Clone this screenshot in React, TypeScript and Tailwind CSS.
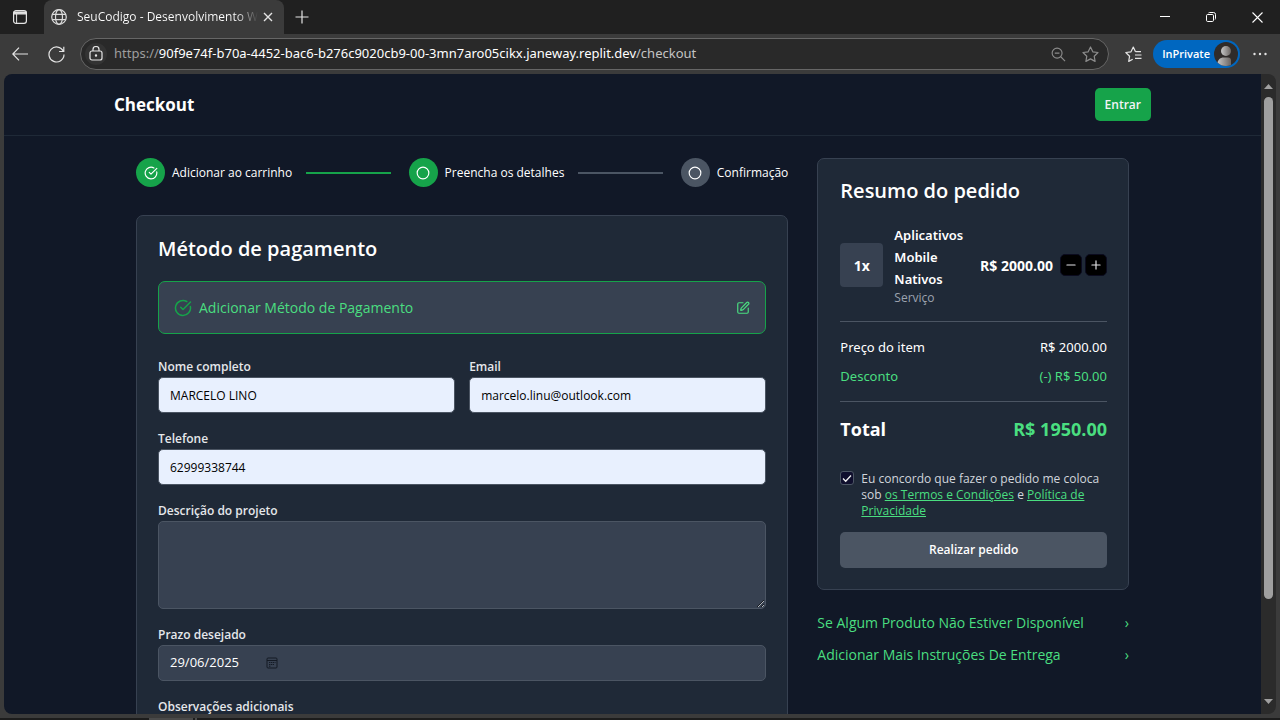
import { useState } from "react";
import type { ReactNode } from "react";
import { Circle, CircleCheckBig, Minus, Plus, SquarePen } from "lucide-react";

const iconButton = "flex shrink-0 items-center justify-center text-[#e4e4e4]";

function TitleBar() {
  return (
    <div className="flex h-[34px] shrink-0 items-stretch bg-[#202020]">
      <button aria-label="Menu de guias" className={`${iconButton} w-10`}>
        <svg width="16" height="16" viewBox="0 0 16 16" fill="none" stroke="currentColor" strokeWidth="1.2">
          <rect x="1.6" y="1.6" width="12.8" height="12.8" rx="2.4" />
          <path d="M2 3h12v1.8H2z" fill="currentColor" />
          <path d="M4.600 5v9" strokeWidth="1" />
        </svg>
      </button>
      <div className="ml-1 flex w-60 items-center rounded-t-lg bg-[#3b3b3b] pr-[6px] pl-[7px]">
        <svg width="16" height="16" viewBox="0 0 16 16" fill="none" stroke="#dcdcdc" strokeWidth="1.2" className="shrink-0">
          <circle cx="8" cy="8" r="7.3" />
          <ellipse cx="8" cy="8" rx="3.5" ry="7.3" />
          <path d="M1.2 5.4h13.6M1.2 10.6h13.6" />
        </svg>
        <span className="ml-[10px] w-[181px] shrink-0 overflow-hidden bg-linear-to-r from-white from-88% to-transparent bg-clip-text text-[12px] whitespace-nowrap text-transparent">
          SeuCodigo - Desenvolvimento Web
        </span>
        <button aria-label="Fechar guia" className={`${iconButton} h-6 w-5`}>
          <svg width="10" height="10" viewBox="0 0 10 10" stroke="currentColor" strokeWidth="1.4">
            <path d="M1 1l8 8M9 1l-8 8" />
          </svg>
        </button>
      </div>
      <button aria-label="Nova guia" className={`${iconButton} w-9`}>
        <svg width="14" height="14" viewBox="0 0 14 14" stroke="currentColor" strokeWidth="1.2">
          <path d="M7 .5v13M.5 7h13" />
        </svg>
      </button>
      <div className="ml-auto flex">
        <button aria-label="Minimizar" className={`${iconButton} w-[46px]`}>
          <svg width="10" height="10" viewBox="0 0 10 10" stroke="#fff">
            <path d="M0 4.5h10" />
          </svg>
        </button>
        <button aria-label="Restaurar" className={`${iconButton} w-[46px]`}>
          <svg width="10" height="10" viewBox="0 0 10 10" fill="none" stroke="#fff">
            <rect x=".5" y="2.500" width="7" height="7" rx="1.200" />
            <path d="M2.500 .9C2.800.6 3.200.5 3.700.5H7.500a2 2 0 0 1 2 2v3.800c0 .5-.1.9-.4 1.200" />
          </svg>
        </button>
        <button aria-label="Fechar" className={`${iconButton} w-[46px]`}>
          <svg width="11" height="11" viewBox="0 0 11 11" stroke="#fff" strokeWidth="1.1">
            <path d="M.5.5l10 10M10.500.5l-10 10" />
          </svg>
        </button>
      </div>
    </div>
  );
}

function AddressBar() {
  return (
    <div className="flex h-10 shrink-0 items-center bg-[#3b3b3b] pr-1">
      <button aria-label="Voltar" className={`${iconButton} w-10`}>
        <svg width="16" height="14" viewBox="0 0 16 14" fill="none" stroke="currentColor" strokeWidth="1.2">
          <path d="M16 7H.8M7 .6L.8 7 7 13.400" />
        </svg>
      </button>
      <button aria-label="Atualizar" className={`${iconButton} w-8`}>
        <svg width="17" height="17" viewBox="0 0 17 17" fill="none" stroke="currentColor" strokeWidth="1.2">
          <path d="M15.300 5.300A7.500 7.500 0 1 0 16 8.500M15.800.8v4.700h-4.700" />
        </svg>
      </button>
      <div className="ml-2 flex h-8 min-w-0 flex-1 items-center rounded-full border border-[#666666] bg-[#292929] pr-[2px] pl-1">
        <button aria-label="Informações do site" className={`${iconButton} size-[22px] rounded-full bg-[#333333]`}>
          <svg width="14" height="16" viewBox="0 0 14 16" fill="none" stroke="currentColor" strokeWidth="1.2">
            <rect x="1" y="5" width="12" height="9" rx="2" />
            <path d="M4 5V3.500a3 3 0 0 1 6 0V5" />
            <circle cx="7" cy="9.500" r=".6" fill="currentColor" />
          </svg>
        </button>
        <div
          role="textbox"
          aria-label="Barra de endereços"
          className="ml-[7px] min-w-0 flex-1 overflow-hidden font-['Noto_Sans',sans-serif] text-[13px] whitespace-nowrap text-[#9e9e9e]"
        >
          https://
          <span className="text-white">90f9e74f-b70a-4452-bac6-b276c9020cb9-00-3mn7aro05cikx.janeway.replit.dev</span>
          <span className="text-[#c4c4c4]">/checkout</span>
        </div>
        <button aria-label="Zoom" className={`${iconButton} w-8`}>
          <svg width="15" height="15" viewBox="0 0 16 16" fill="none" stroke="#8c8c8c" strokeWidth="1.2">
            <circle cx="6.500" cy="6.500" r="5.300" />
            <path d="M10.400 10.400l4.600 4.600M4 6.500h5" />
          </svg>
        </button>
        <button aria-label="Adicionar aos favoritos" className={`${iconButton} w-8`}>
          <svg width="17" height="17" viewBox="0 0 17 17" fill="none" stroke="#8c8c8c" strokeWidth="1.2" strokeLinejoin="round">
            <path d="M8.500 1l2.300 4.800 5.200.7-3.800 3.700.9 5.200-4.600-2.500-4.600 2.500.9-5.200L1 6.500l5.200-.7z" />
          </svg>
        </button>
      </div>
      <button aria-label="Favoritos" className={`${iconButton} ml-2 w-8`}>
        <svg width="17" height="17" viewBox="0 0 17 17" fill="none" stroke="currentColor" strokeWidth="1.200" strokeLinejoin="round">
          <path d="M10.500 5.700L8.300 1 6 5.800.8 6.500l3.800 3.700-.9 5.200 4-2.200M10.500 5.700H16M10 9h6.500M10 12.300h6.500" />
        </svg>
      </button>
      <button className="ml-1 flex h-7 shrink-0 items-center rounded-full bg-[#0067c0] pr-[2px] pl-[9px] text-[11px] font-semibold text-white">
        InPrivate
        <svg width="24" height="24" viewBox="0 0 24 24" className="ml-1">
          <defs>
            <linearGradient id="avatar" x1="0" x2="1">
              <stop offset="0" stopColor="#c8c8c8" />
              <stop offset="1" stopColor="#6a6461" />
            </linearGradient>
            <clipPath id="avatar-clip">
              <circle cx="12" cy="12" r="12" />
            </clipPath>
          </defs>
          <g clipPath="url(#avatar-clip)">
            <rect width="24" height="24" fill="#2f2b29" />
            <circle cx="12" cy="9" r="5" fill="url(#avatar)" />
            <path d="M3 24c0-6 3-8.500 7-8.500h4c2 0 3 1 3 3V24z" fill="url(#avatar)" />
          </g>
        </svg>
      </button>
      <button aria-label="Configurações e mais" className={`${iconButton} ml-1 w-8`}>
        <svg width="14" height="4" viewBox="0 0 14 4" fill="currentColor">
          <circle cx="1.500" cy="2" r="1.200" />
          <circle cx="7" cy="2" r="1.200" />
          <circle cx="12.500" cy="2" r="1.200" />
        </svg>
      </button>
    </div>
  );
}

function Scrollbar() {
  return (
    <div aria-hidden="true" className="flex w-[15px] shrink-0 flex-col items-center bg-[#2b2b2b] py-[10px]">
      <svg width="9" height="5" viewBox="0 0 9 5" fill="#a0a0a0">
        <path d="M4.500 0L9 5H0z" />
      </svg>
      <div className="mt-2 h-[81%] w-[9px] rounded-full bg-[#9f9f9f]" />
      <svg width="9" height="5" viewBox="0 0 9 5" fill="#a0a0a0" className="mt-auto">
        <path d="M0 0h9L4.500 5z" />
      </svg>
    </div>
  );
}

function Step({ label, state }: { label: string; state: "done" | "current" | "pending" }) {
  return (
    <li className="flex items-center gap-[7px]">
      <span
        className={`flex size-[29px] items-center justify-center rounded-full text-white ${
          state === "pending" ? "bg-[#4b5563]" : "bg-[#16a34a]"
        }`}
      >
        {state === "done" ? <CircleCheckBig size={14} /> : <Circle size={14} />}
      </span>
      <span className="text-[12px] whitespace-nowrap">{label}</span>
    </li>
  );
}

function StepLine({ done = false }: { done?: boolean }) {
  return (
    <li aria-hidden="true" className={`mr-[18px] ml-[14px] h-[2px] flex-1 ${done ? "bg-[#16a34a]" : "bg-[#4b5563]"}`} />
  );
}

function Field({ id, label, children }: { id: string; label: string; children: ReactNode }) {
  return (
    <div>
      <label htmlFor={id} className="block h-[22px] text-[12px] leading-6 font-semibold text-gray-200">
        {label}
      </label>
      {children}
    </div>
  );
}

const filledInput =
  "block h-9 w-full rounded-[5px] border border-[#4b5563] bg-[#e8f0fe] px-[11px] text-[12px] text-black outline-none";
const darkInput = "rounded-[5px] border border-[#4b5563] bg-[#374151] text-[13px] text-white";

function PaymentCard() {
  return (
    <section className="rounded-[7px] border border-[#374151] bg-[#1f2937] px-[21px] pt-[18px] pb-[22px]">
      <h2 className="text-[20px] leading-[30px] font-semibold">Método de pagamento</h2>
      <div className="mt-[17px] flex h-[53px] items-center rounded-[7px] border border-[#16a34a] bg-[#374151] px-[15px] text-[#4ade80]">
        <CircleCheckBig size={18} className="text-[#16a34a]" />
        <span className="ml-[7px] text-[14px]">Adicionar Método de Pagamento</span>
        <button aria-label="Editar método de pagamento" className="ml-auto">
          <SquarePen size={14} />
        </button>
      </div>
      <form className="mt-[21px] flex flex-col gap-[14px]">
        <div className="grid grid-cols-2 gap-[14px]">
          <Field id="nome" label="Nome completo">
            <input id="nome" className={filledInput} defaultValue="MARCELO LINO" />
          </Field>
          <Field id="email" label="Email">
            <input id="email" type="email" className={filledInput} defaultValue="marcelo.linu@outlook.com" />
          </Field>
        </div>
        <Field id="telefone" label="Telefone">
          <input id="telefone" type="tel" className={filledInput} defaultValue="62999338744" />
        </Field>
        <Field id="descricao" label="Descrição do projeto">
          <textarea id="descricao" className={`${darkInput} block h-[88px] w-full resize-y p-[11px]`} />
        </Field>
        <Field id="prazo" label="Prazo desejado">
          <div className={`${darkInput} flex h-9 items-center px-[11px]`}>
            <input id="prazo" inputMode="numeric" className="w-24 bg-transparent outline-none" defaultValue="29/06/2025" />
            <button type="button" aria-label="Abrir calendário">
              <svg width="12" height="12" viewBox="0 0 12 12" fill="none" stroke="#141a24">
                <rect x="1" y="1" width="10" height="10" rx="1" />
                <path d="M1 3.500h10" />
                <path d="M3 5.500h6.500M3 7.500h5M3 9.200h2" strokeDasharray="1.400 .6" />
              </svg>
            </button>
          </div>
        </Field>
        <Field id="observacoes" label="Observações adicionais">
          <textarea id="observacoes" className={`${darkInput} block h-[88px] w-full resize-y p-[11px]`} />
        </Field>
      </form>
    </section>
  );
}

function OrderSummary() {
  const [quantity, setQuantity] = useState(1);
  const [agreed, setAgreed] = useState(true);
  const stepButton =
    "flex size-[22px] items-center justify-center rounded-[5px] border border-[#0b0b1e] bg-black text-[#e4e4e7]";

  return (
    <section className="rounded-[7px] border border-[#374151] bg-[#1f2937] pt-[17px] pr-[21px] pb-[21px] pl-[22px]">
      <h2 className="text-[20px] leading-[30px] font-semibold">Resumo do pedido</h2>
      <div className="mt-[18px] flex items-center">
        <div className="flex h-11 w-[43px] shrink-0 items-center justify-center rounded-[4px] bg-[#374151] text-[14px] font-bold">
          {quantity}x
        </div>
        <div className="ml-[11px] min-w-0 flex-1">
          <h3 className="w-min font-['Noto_Sans',sans-serif] text-[13px] leading-[22px] font-semibold">
            Aplicativos Mobile Nativos
          </h3>
          <p className="text-[12px] leading-4 text-[#9ca3af]">Serviço</p>
        </div>
        <span className="mr-[7px] text-[14px] font-bold whitespace-nowrap">R$ 2000.00</span>
        <div className="flex gap-[3px]">
          <button aria-label="Diminuir" className={stepButton} onClick={() => setQuantity(Math.max(1, quantity - 1))}>
            <Minus size={14} />
          </button>
          <button aria-label="Aumentar" className={stepButton} onClick={() => setQuantity(quantity + 1)}>
            <Plus size={14} />
          </button>
        </div>
      </div>
      <dl className="mt-[15px] flex flex-col gap-[7px] border-y border-[#4b5563] py-[14px] font-['Noto_Sans',sans-serif] text-[13px] leading-[22px]">
        <div className="flex justify-between">
          <dt>Preço do item</dt>
          <dd>R$ 2000.00</dd>
        </div>
        <div className="flex justify-between text-[#4ade80]">
          <dt>Desconto</dt>
          <dd>(-) R$ 50.00</dd>
        </div>
      </dl>
      <div className="mt-[14px] flex justify-between text-[18px] leading-[26px] font-bold">
        <span>Total</span>
        <span className="text-[#4ade80]">R$ 1950.00</span>
      </div>
      <div className="mt-[29px] flex items-start gap-[7px]">
        <span className="relative size-[14px] shrink-0">
          <input
            id="termos"
            type="checkbox"
            checked={agreed}
            onChange={(event) => setAgreed(event.target.checked)}
            className="block size-[14px] appearance-none rounded-[3px] border border-[#4b5563] bg-[#0f0f2d]"
          />
          {agreed && (
            <svg
              viewBox="0 0 14 14"
              fill="none"
              stroke="#f0f0f0"
              strokeWidth="1.300"
              className="pointer-events-none absolute inset-0 size-[14px]"
            >
              <path d="M3 7.500l2.700 2.700L11 4.500" />
            </svg>
          )}
        </span>
        <label htmlFor="termos" className="text-[12px] leading-4 text-gray-300">
          Eu concordo que fazer o pedido me coloca sob{" "}
          <a href="#termos" className="text-[#4ade80] underline">
            os Termos e Condições
          </a>{" "}
          e{" "}
          <a href="#privacidade" className="text-[#4ade80] underline">
            Política de Privacidade
          </a>
        </label>
      </div>
      <button className="mt-[13px] h-9 w-full rounded-[5px] bg-[#4b5563] text-[12px] font-semibold">Realizar pedido</button>
    </section>
  );
}

function ExtraLink({ children }: { children: ReactNode }) {
  return (
    <a href="#opcoes" className="flex items-center justify-between text-[14px] leading-[22px] text-[#4ade80]">
      <span>{children}</span>
      <span>›</span>
    </a>
  );
}

function CheckoutPage() {
  return (
    <div className="min-w-0 flex-1 overflow-hidden bg-[#111827] text-white">
      <header className="border-b border-[#1f2937]">
        <div className="mx-auto flex h-[61px] max-w-[1037px] items-center justify-between">
          <h1 className="text-[17px] font-bold">Checkout</h1>
          <button className="h-[33px] rounded-[5px] bg-[#16a34a] px-[10px] text-[12px] font-semibold text-gray-100">
            Entrar
          </button>
        </div>
      </header>
      <main className="mx-auto grid max-w-[1037px] grid-cols-3 items-start gap-[29px] px-[22px] py-[22px]">
        <div className="col-span-2">
          <ol className="mb-7 flex items-center">
            <Step label="Adicionar ao carrinho" state="done" />
            <StepLine done />
            <Step label="Preencha os detalhes" state="current" />
            <StepLine />
            <Step label="Confirmação" state="pending" />
          </ol>
          <PaymentCard />
        </div>
        <aside>
          <OrderSummary />
          <div className="mt-[22px] flex flex-col gap-[10px]">
            <ExtraLink>Se Algum Produto Não Estiver Disponível</ExtraLink>
            <ExtraLink>Adicionar Mais Instruções De Entrega</ExtraLink>
          </div>
        </aside>
      </main>
    </div>
  );
}

export default function App() {
  return (
    <div className="flex h-screen flex-col overflow-hidden bg-[#3b3b3b] font-['Open_Sans','Noto_Sans',sans-serif]">
      <TitleBar />
      <AddressBar />
      <div className="mx-1 flex min-h-0 flex-1 overflow-hidden rounded-lg">
        <CheckoutPage />
        <Scrollbar />
      </div>
      <div className="mt-1 flex h-[2px] shrink-0 bg-[#1c1c1c]">
        <div className="ml-[149px] w-11 bg-[#4a4a4a]" />
        <div className="ml-[2px] w-[2px] bg-[#4a4a4a]" />
      </div>
    </div>
  );
}
